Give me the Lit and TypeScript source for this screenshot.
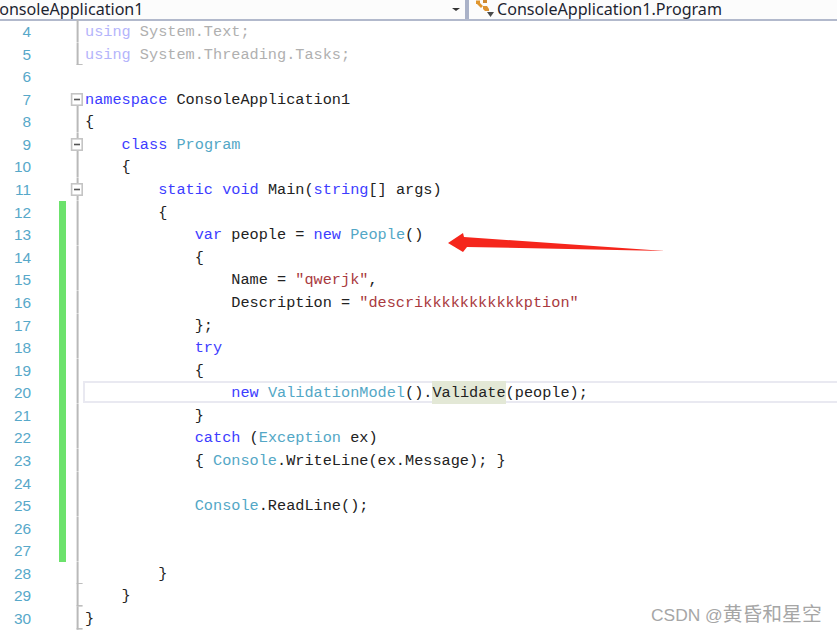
import { LitElement, html, css, svg } from "lit";
import { customElement } from "lit/decorators.js";

type Seg = [string, string];
type Fold = "" | "line" | "box" | "boxStart" | "tick" | "cap" | "capEnd";
interface Row { n: number; fold: Fold; changed?: boolean; active?: boolean; segs: Seg[]; }

const k = (t: string): Seg => ["kw", t];
const t = (t: string): Seg => ["ty", t];
const p = (t: string): Seg => ["pl", t];
const s = (t: string): Seg => ["st", t];
const g = (t: string): Seg => ["gk", t];
const d = (t: string): Seg => ["gd", t];
const m = (t: string): Seg => ["mk", t];

const ROWS: Row[] = [
  { n: 4, fold: "cap", segs: [g("using"), d(" System.Text;")] },
  { n: 5, fold: "capEnd", segs: [g("using"), d(" System.Threading.Tasks;")] },
  { n: 6, fold: "", segs: [] },
  { n: 7, fold: "boxStart", segs: [k("namespace"), p(" ConsoleApplication1")] },
  { n: 8, fold: "line", segs: [p("{")] },
  { n: 9, fold: "box", segs: [p("    "), k("class"), p(" "), t("Program")] },
  { n: 10, fold: "line", segs: [p("    {")] },
  { n: 11, fold: "box", segs: [p("        "), k("static"), p(" "), k("void"), p(" Main("), k("string"), p("[] args)")] },
  { n: 12, fold: "line", changed: true, segs: [p("        {")] },
  { n: 13, fold: "line", changed: true, segs: [p("            "), k("var"), p(" people = "), k("new"), p(" "), t("People"), p("()")] },
  { n: 14, fold: "line", changed: true, segs: [p("            {")] },
  { n: 15, fold: "line", changed: true, segs: [p("                Name = "), s("\"qwerjk\""), p(",")] },
  { n: 16, fold: "line", changed: true, segs: [p("                Description = "), s("\"descrikkkkkkkkkkkption\"")] },
  { n: 17, fold: "line", changed: true, segs: [p("            };")] },
  { n: 18, fold: "line", changed: true, segs: [p("            "), k("try")] },
  { n: 19, fold: "line", changed: true, segs: [p("            {")] },
  { n: 20, fold: "line", changed: true, active: true, segs: [p("                "), k("new"), p(" "), t("ValidationModel"), p("()."), m("Validate"), p("(people);")] },
  { n: 21, fold: "line", changed: true, segs: [p("            }")] },
  { n: 22, fold: "line", changed: true, segs: [p("            "), k("catch"), p(" ("), t("Exception"), p(" ex)")] },
  { n: 23, fold: "line", changed: true, segs: [p("            { "), t("Console"), p(".WriteLine(ex.Message); }")] },
  { n: 24, fold: "line", changed: true, segs: [] },
  { n: 25, fold: "line", changed: true, segs: [p("            "), t("Console"), p(".ReadLine();")] },
  { n: 26, fold: "line", changed: true, segs: [] },
  { n: 27, fold: "line", changed: true, segs: [] },
  { n: 28, fold: "tick", segs: [p("        }")] },
  { n: 29, fold: "tick", segs: [p("    }")] },
  { n: 30, fold: "tick", segs: [p("}")] },
];

const foldMark = (f: Fold) => {
  const H = 22.58;
  const c = "#b9b9b9";
  const vline = (a: number, b: number) => svg`<rect x="9.6" y=${a} width="2" height=${b - a} fill=${c}></rect>`;
  const tick = svg`<rect x="9.6" y=${H - 1.5} width="6" height="1.5" fill=${c}></rect>`;
  const box = svg`<rect x="4.6" y="5.8" width="10.6" height="11.4" fill="#fff" stroke="#c4c4c4" stroke-width="1.6"></rect>
    <rect x="7" y="10.7" width="6" height="1.6" fill="#555"></rect>`;
  return html`<svg class="foldsvg" viewBox="0 0 16 ${H}" aria-hidden="true">
    ${f === "line" ? vline(0, H) : ""}
    ${f === "cap" ? vline(0, H) : ""}
    ${f === "capEnd" ? [vline(0, H), tick] : ""}
    ${f === "tick" ? [vline(0, H), tick] : ""}
    ${f === "box" ? [vline(0, H), box] : ""}
    ${f === "boxStart" ? [vline(11, H), box] : ""}
  </svg>`;
};

@customElement("app-root")
export class AppRoot extends LitElement {
  static styles = css`
    :host { display: block; width: 837px; height: 633px; overflow: hidden; position: relative; background: #fff; }
    .bar { display: flex; align-items: stretch; background: #fcfcfc; border-bottom: 2px solid #b2b9cc; box-sizing: border-box; height: 21px; font-family: "Noto Sans", sans-serif; font-size: 16.1px; color: #1c2430; overflow: hidden; }
    .left { width: 465px; flex: none; display: flex; align-items: center; overflow: hidden; }
    .left .label { margin-left: -11px; flex: 1; line-height: 19px; white-space: nowrap; }
    .drop { width: 0; height: 0; border-left: 4px solid transparent; border-right: 4px solid transparent; border-top: 3.5px solid #333; margin-right: 5px; flex: none; }
    .sep { width: 4px; background: #aab2c8; flex: none; }
    .right { flex: 1; display: flex; align-items: center; padding-left: 5px; gap: 3px; white-space: nowrap; line-height: 19px; }
    .right svg { flex: none; width: 20px; height: 19px; }
    .editor { display: flex; flex-direction: column; margin-top: -1px; }
    .row { display: flex; height: 22.58px; align-items: stretch; }
    .num { width: 31px; flex: none; text-align: right; font-family: "Liberation Sans", sans-serif; font-size: 15.4px; line-height: 24.58px; color: #57a8c9; }
    .chg { width: 7px; margin-left: 28px; flex: none; }
    .chg.on { background: #6ce26c; }
    .gap { width: 1px; flex: none; }
    .foldsvg { width: 16px; height: 22.58px; flex: none; display: block; }
    .code { flex: 1; min-width: 0; margin-left: 2px; white-space: pre; font-family: "Liberation Mono", monospace; font-size: 15.24px; line-height: 24.58px; color: #222; box-sizing: border-box; }
    .code.active { margin-left: 0; height: 22px; border-top: 2px solid #e9e9f1; border-bottom: 2px solid #e9e9f1; border-left: 2px solid #e9e9f1; line-height: 20.58px; }
    .kw { color: #3d3dff; }
    .ty { color: #53a7c6; }
    .pl { color: #222; }
    .st { color: #a93a40; }
    .gk { color: #b4b4fb; }
    .gd { color: #b0b0b0; }
    .mk { background: #e3e8d6; color: #222; display: inline-block; line-height: 18.58px; padding: 3px 0 1px; margin: -3px 0 -1px; }
    .arrow { position: absolute; left: 440px; top: 225px; width: 235px; height: 35px; }
    .mark { position: absolute; left: 651px; top: 601px; font-family: "Liberation Sans", sans-serif; font-size: 17.4px; line-height: 24px; color: #a6a6a6; white-space: nowrap; }
    .cjk { font-family: "Noto Sans CJK SC", sans-serif; font-size: 19.8px; }
  `;

  render() {
    return html`
      <div class="bar">
        <div class="left"><span class="label">ConsoleApplication1</span><span class="drop"></span></div>
        <div class="sep"></div>
        <div class="right">
          <svg viewBox="0 0 20 19" aria-hidden="true">
            <path d="M2 0.5 L6 0.5 L6 3 L9 6 L7 8 L3 4 L2 4 Z" fill="#e0962e"></path>
            <path d="M9 0 L13 0 L13 3 L9 3 Z" fill="#cf8a30"></path>
            <path d="M9 6 L13 6 L15 9 L15 11 L11 11 L9 9 Z" fill="#dd9433"></path>
            <path d="M13 12h7l-3.5 5z" fill="#4a4a4a"></path>
          </svg>
          <span>ConsoleApplication1.Program</span>
        </div>
      </div>
      <div class="editor">
        ${ROWS.map(
          (r) => html`<div class="row">
            <div class="num">${r.n}</div>
            <div class="chg ${r.changed ? "on" : ""}"></div>
            <div class="gap"></div>
            ${foldMark(r.fold)}
            <div class="code ${r.active ? "active" : ""}">${r.segs.map(([c, x]) => html`<span class=${c}>${x}</span>`)}</div>
          </div>`
        )}
      </div>
      <svg class="arrow" viewBox="0 0 235 35" aria-hidden="true">
        <polygon points="8,18 23,8 24,12 225,26 27,22 23,27" fill="#f5261c"></polygon>
      </svg>
      <div class="mark">CSDN @<span class="cjk">黄昏和星空</span></div>
    `;
  }
}
